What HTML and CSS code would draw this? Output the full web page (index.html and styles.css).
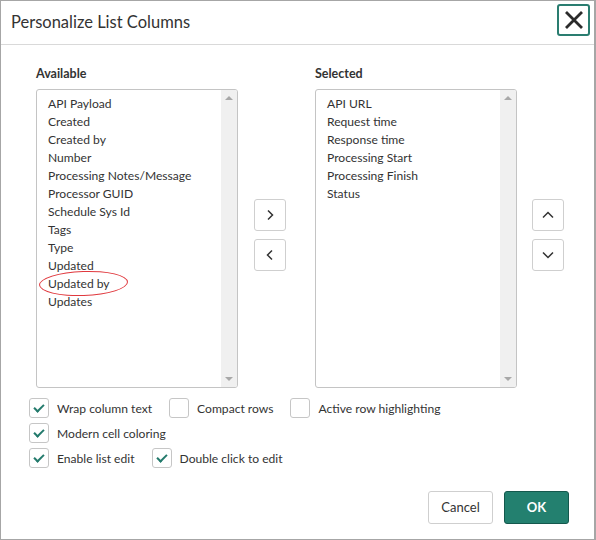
FILE: index.html
```
<!DOCTYPE html>
<html>
<head>
<meta charset="utf-8">
<link rel="stylesheet" href="styles.css">
</head>
<body>
<div class="dialog">
  <div class="header">
    <div class="title">Personalize List Columns</div>
    <button class="close" aria-label="Close">
      <svg width="22" height="22" viewBox="0 0 22 22"><path d="M3 3 L19 19 M19 3 L3 19" stroke="#2b2b2b" stroke-width="2.8" fill="none"/></svg>
    </button>
  </div>
  <div class="body">
    <div class="lists">
      <div class="col">
        <div class="label">Available</div>
        <div class="listbox">
          <ul class="items">
            <li>API Payload</li>
            <li>Created</li>
            <li>Created by</li>
            <li>Number</li>
            <li>Processing Notes/Message</li>
            <li>Processor GUID</li>
            <li>Schedule Sys Id</li>
            <li>Tags</li>
            <li>Type</li>
            <li>Updated</li>
            <li class="circled">Updated by<span class="ring"></span></li>
            <li>Updates</li>
          </ul>
          <div class="scrollbar"><span class="arr up"></span><span class="arr down"></span></div>
        </div>
      </div>
      <div class="mid">
        <button class="sq"><svg width="12" height="12" viewBox="0 0 12 12"><path d="M4 1.5 L8.5 6 L4 10.5" stroke="#333" stroke-width="1.5" fill="none"/></svg></button>
        <button class="sq"><svg width="12" height="12" viewBox="0 0 12 12"><path d="M8 1.5 L3.5 6 L8 10.5" stroke="#333" stroke-width="1.5" fill="none"/></svg></button>
      </div>
      <div class="col">
        <div class="label">Selected</div>
        <div class="listbox">
          <ul class="items">
            <li>API URL</li>
            <li>Request time</li>
            <li>Response time</li>
            <li>Processing Start</li>
            <li>Processing Finish</li>
            <li>Status</li>
          </ul>
          <div class="scrollbar"><span class="arr up"></span><span class="arr down"></span></div>
        </div>
      </div>
      <div class="mid right">
        <button class="sq"><svg width="14" height="12" viewBox="0 0 14 12"><path d="M2 8.5 L7 3.5 L12 8.5" stroke="#333" stroke-width="1.5" fill="none"/></svg></button>
        <button class="sq"><svg width="14" height="12" viewBox="0 0 14 12"><path d="M2 3.5 L7 8.5 L12 3.5" stroke="#333" stroke-width="1.5" fill="none"/></svg></button>
      </div>
    </div>
    <div class="options">
      <div class="row">
        <label class="opt"><span class="box on"></span>Wrap column text</label>
        <label class="opt"><span class="box"></span>Compact rows</label>
        <label class="opt"><span class="box"></span>Active row highlighting</label>
      </div>
      <div class="row">
        <label class="opt"><span class="box on"></span>Modern cell coloring</label>
      </div>
      <div class="row">
        <label class="opt"><span class="box on"></span>Enable list edit</label>
        <label class="opt"><span class="box on"></span>Double click to edit</label>
      </div>
    </div>
    <div class="footer">
      <button class="btn cancel">Cancel</button>
      <button class="btn ok">OK</button>
    </div>
  </div>
</div>
</body>
</html>
```

FILE: styles.css
```
html, body {
  margin: 0;
  padding: 0;
  background: #fff;
}
body {
  font-family: "Source Sans Pro", Lato, "Liberation Sans", sans-serif;
  color: #2e2e2e;
}
.dialog {
  box-sizing: border-box;
  width: 596px;
  height: 540px;
  border: 1px solid #a6a6a6;
  border-right-width: 2px;
  display: flex;
  flex-direction: column;
}
.header {
  height: 43px;
  border-bottom: 1px solid #d9d9d9;
  display: flex;
  align-items: center;
  justify-content: space-between;
  padding: 0 4px 0 10px;
}
.title {
  font-size: 16.5px;
  color: #333;
  margin-top: -1px;
}
.close {
  box-sizing: border-box;
  width: 33px;
  height: 32px;
  border: 2px solid #2a7d70;
  border-radius: 3px;
  background: #fff;
  padding: 0;
  display: flex;
  align-items: center;
  justify-content: center;
  margin-top: -5px;
}
.body {
  flex: 1;
  padding: 21px 0 0 0;
  display: flex;
  flex-direction: column;
}
.lists {
  display: flex;
  padding-left: 35px;
}
.col {
  display: flex;
  flex-direction: column;
}
.label {
  font-size: 12.5px;
  font-weight: 700;
  color: #333;
  height: 16px;
  line-height: 16px;
  margin-bottom: 7px;
}
.listbox {
  box-sizing: border-box;
  width: 202px;
  height: 299px;
  border: 1px solid #c4c4c4;
  border-radius: 3px;
  display: flex;
  overflow: hidden;
}
.items {
  list-style: none;
  margin: 0;
  padding: 5px 0 0 11px;
  flex: 1;
  font-size: 12.1px;
  line-height: 18px;
  color: #333;
}
.items li {
  white-space: nowrap;
}
.circled {
  position: relative;
}
.ring {
  position: absolute;
  left: -9px;
  top: -4px;
  width: 87px;
  height: 23px;
  border: 1.6px solid #e0393e;
  border-radius: 50%;
  transform: rotate(-2deg);
}
.scrollbar {
  width: 16px;
  background: #f0f0f0;
  display: flex;
  flex-direction: column;
  justify-content: space-between;
  align-items: center;
  padding: 6px 0 6px 0;
}
.arr {
  width: 0;
  height: 0;
  border-left: 4px solid transparent;
  border-right: 4px solid transparent;
}
.arr.up { border-bottom: 4px solid #a8a8a8; }
.arr.down { border-top: 4px solid #a8a8a8; }
.mid {
  box-sizing: border-box;
  width: 77px;
  display: flex;
  flex-direction: column;
  align-items: flex-start;
  gap: 8px;
  padding: 133px 0 0 16px;
}
.mid.right {
  width: 63px;
  padding-left: 15px;
}
.sq {
  box-sizing: border-box;
  width: 32px;
  height: 32px;
  border: 1px solid #cfcfcf;
  border-radius: 3px;
  background: #fff;
  padding: 0;
  display: flex;
  align-items: center;
  justify-content: center;
}
.options {
  padding: 10px 0 0 28px;
  display: flex;
  flex-direction: column;
  gap: 5px;
}
.row {
  display: flex;
}
.opt {
  display: flex;
  align-items: center;
  font-size: 12.1px;
  color: #333;
  height: 20px;
  margin-right: 17px;
}
.box {
  box-sizing: border-box;
  width: 20px;
  height: 20px;
  border: 1px solid #c6c6c6;
  border-radius: 3px;
  margin-right: 8px;
  position: relative;
  flex: none;
}
.box.on::after {
  content: "";
  position: absolute;
  left: 6px;
  top: 3px;
  width: 4px;
  height: 8px;
  border-right: 2px solid #237a6c;
  border-bottom: 2px solid #237a6c;
  transform: rotate(45deg);
}
.footer {
  margin-top: auto;
  display: flex;
  justify-content: flex-end;
  gap: 11px;
  padding: 0 25px 15px 0;
}
.btn {
  box-sizing: border-box;
  width: 65px;
  height: 33px;
  border-radius: 3px;
  font-family: inherit;
  font-size: 13px;
  padding: 0 0 1px 0;
}
.cancel {
  background: #fff;
  border: 1px solid #cfcfcf;
  color: #333;
}
.ok {
  background: #23806f;
  border: 1px solid #14584d;
  color: #fff;
  font-weight: 700;
}
```
